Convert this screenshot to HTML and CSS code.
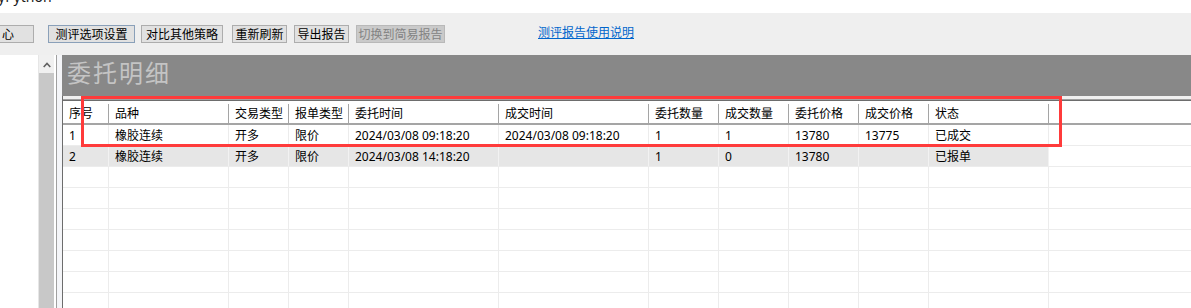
FILE: index.html
```html
<!DOCTYPE html>
<html lang="zh-CN">
<head>
    <meta charset="UTF-8">
    <meta name="viewport" content="width=device-width, initial-scale=1.0">
    <title>测评报告</title>
    <link rel="stylesheet" href="styles.css">
</head>
<body>
    <div class="titlebar"><span class="titlebar-text">yPython</span></div>

    <div class="toolbar">
        <button class="btn btn-center">心</button>
        <button class="btn btn-default btn-settings">测评选项设置</button>
        <button class="btn btn-compare">对比其他策略</button>
        <button class="btn btn-refresh">重新刷新</button>
        <button class="btn btn-export">导出报告</button>
        <button class="btn btn-simple" disabled>切换到简易报告</button>
        <a class="help-link" href="#">测评报告使用说明</a>
    </div>

    <div class="main">
        <div class="side">
            <div class="side-list"></div>
            <div class="scrollbar">
                <div class="scroll-up">
                    <svg width="8" height="6" viewBox="0 0 8 6"><polyline points="0.7,5 4,1.5 7.3,5" fill="none" stroke="#606060" stroke-width="1.6"/></svg>
                </div>
                <div class="scroll-track"></div>
            </div>
        </div>
        <div class="splitter"></div>
        <div class="content">
            <div class="section-head">委托明细</div>
            <div class="grid-frame">
                <div class="grid">
                    <div class="grid-row grid-head">
                        <div class="cell">序号</div>
                        <div class="cell">品种</div>
                        <div class="cell">交易类型</div>
                        <div class="cell">报单类型</div>
                        <div class="cell">委托时间</div>
                        <div class="cell">成交时间</div>
                        <div class="cell">委托数量</div>
                        <div class="cell">成交数量</div>
                        <div class="cell">委托价格</div>
                        <div class="cell">成交价格</div>
                        <div class="cell">状态</div>
                        <div class="cell cell-fill"></div>
                    </div>
                    <div class="grid-row">
                        <div class="cell">1</div>
                        <div class="cell">橡胶连续</div>
                        <div class="cell">开多</div>
                        <div class="cell">限价</div>
                        <div class="cell">2024/03/08 09:18:20</div>
                        <div class="cell">2024/03/08 09:18:20</div>
                        <div class="cell">1</div>
                        <div class="cell">1</div>
                        <div class="cell">13780</div>
                        <div class="cell">13775</div>
                        <div class="cell">已成交</div>
                        <div class="cell cell-fill"></div>
                    </div>
                    <div class="grid-row row-alt">
                        <div class="cell">2</div>
                        <div class="cell">橡胶连续</div>
                        <div class="cell">开多</div>
                        <div class="cell">限价</div>
                        <div class="cell">2024/03/08 14:18:20</div>
                        <div class="cell"></div>
                        <div class="cell">1</div>
                        <div class="cell">0</div>
                        <div class="cell">13780</div>
                        <div class="cell"></div>
                        <div class="cell">已报单</div>
                        <div class="cell cell-fill"></div>
                    </div>
                    <div class="grid-row"><div class="cell"></div><div class="cell"></div><div class="cell"></div><div class="cell"></div><div class="cell"></div><div class="cell"></div><div class="cell"></div><div class="cell"></div><div class="cell"></div><div class="cell"></div><div class="cell"></div><div class="cell cell-fill"></div></div>
                    <div class="grid-row"><div class="cell"></div><div class="cell"></div><div class="cell"></div><div class="cell"></div><div class="cell"></div><div class="cell"></div><div class="cell"></div><div class="cell"></div><div class="cell"></div><div class="cell"></div><div class="cell"></div><div class="cell cell-fill"></div></div>
                    <div class="grid-row"><div class="cell"></div><div class="cell"></div><div class="cell"></div><div class="cell"></div><div class="cell"></div><div class="cell"></div><div class="cell"></div><div class="cell"></div><div class="cell"></div><div class="cell"></div><div class="cell"></div><div class="cell cell-fill"></div></div>
                    <div class="grid-row"><div class="cell"></div><div class="cell"></div><div class="cell"></div><div class="cell"></div><div class="cell"></div><div class="cell"></div><div class="cell"></div><div class="cell"></div><div class="cell"></div><div class="cell"></div><div class="cell"></div><div class="cell cell-fill"></div></div>
                    <div class="grid-row"><div class="cell"></div><div class="cell"></div><div class="cell"></div><div class="cell"></div><div class="cell"></div><div class="cell"></div><div class="cell"></div><div class="cell"></div><div class="cell"></div><div class="cell"></div><div class="cell"></div><div class="cell cell-fill"></div></div>
                    <div class="grid-row"><div class="cell"></div><div class="cell"></div><div class="cell"></div><div class="cell"></div><div class="cell"></div><div class="cell"></div><div class="cell"></div><div class="cell"></div><div class="cell"></div><div class="cell"></div><div class="cell"></div><div class="cell cell-fill"></div></div>
                    <div class="grid-row"><div class="cell"></div><div class="cell"></div><div class="cell"></div><div class="cell"></div><div class="cell"></div><div class="cell"></div><div class="cell"></div><div class="cell"></div><div class="cell"></div><div class="cell"></div><div class="cell"></div><div class="cell cell-fill"></div></div>
                </div>
            </div>
        </div>
    </div>

    <!-- annotation box drawn over the grid -->
    <div class="highlight"></div>
</body>
</html>
```

FILE: styles.css
```css
:root {
    --toolbar-bg: #efefef;
    --button-bg: #e1e1e1;
    --button-border: #adadad;
    --grid-line: #ececec;
    --head-line: #a5a5a5;
    --link-color: #0066cc;
    --mark-color: #ff3b3b;
}
body {
    margin: 0;
    width: 1191px;
    height: 308px;
    overflow: hidden;
    position: relative;
    font-family: "Noto Sans CJK SC", "Microsoft YaHei", sans-serif;
    font-size: 12px;
    color: #000000;
    background-color: #ffffff;
}
.titlebar {
    height: 13px;
    overflow: hidden;
    background-color: #ffffff;
}
.titlebar-text {
    display: block;
    margin: -10px 0 0 -2px;
    font-family: "Noto Sans", sans-serif;
    font-size: 14px;
    line-height: 13px;
    color: #1a1a1a;
}
.toolbar {
    display: flex;
    align-items: flex-start;
    height: 42px;
    padding-top: 12px;
    box-sizing: border-box;
    background-color: var(--toolbar-bg);
}
.btn {
    flex-shrink: 0;
    height: 18px;
    padding: 0;
    font-family: inherit;
    font-size: 12px;
    line-height: 16px;
    color: #000000;
    background-color: var(--button-bg);
    border: 1px solid var(--button-border);
    box-sizing: border-box;
}
.btn-center {
    width: 34px;
    border-left: none;
    text-align: left;
    padding-left: 2px;
}
.btn-default {
    border-color: #8aa0b9;
}
.btn-settings {
    width: 87px;
    margin-left: 14px;
}
.btn-compare {
    width: 82px;
    margin-left: 6px;
}
.btn-refresh {
    width: 55px;
    margin-left: 9px;
}
.btn-export {
    width: 55px;
    margin-left: 7px;
}
.btn-simple {
    width: 89px;
    margin-left: 7px;
    color: #838383;
    background-color: #cacaca;
    border-color: #b9b9b9;
}
.help-link {
    margin: -1px 0 0 93px;
    line-height: 16px;
    color: var(--link-color);
    text-decoration: underline;
}
.main {
    display: flex;
    height: 253px;
    overflow: hidden;
}
.side {
    display: flex;
    flex-shrink: 0;
    width: 56px;
    padding-right: 2px;
    box-sizing: border-box;
    background-color: #ffffff;
}
.side-list {
    width: 39px;
    border-right: 1px solid #e6e6e6;
    box-sizing: border-box;
}
.scrollbar {
    display: flex;
    flex-direction: column;
    width: 15px;
}
.scroll-up {
    display: flex;
    flex-shrink: 0;
    align-items: center;
    justify-content: center;
    height: 18px;
    padding-top: 1px;
    box-sizing: border-box;
    background-color: #f0f0f0;
}
.scroll-track {
    flex: 1;
    background-color: #c8c8c8;
}
.splitter {
    flex-shrink: 0;
    width: 6px;
    border-left: 1px solid #a0a0a0;
    box-sizing: border-box;
    background-color: #f4f5f8;
}
.content {
    flex: 1;
    display: flex;
    flex-direction: column;
    min-width: 0;
    overflow: hidden;
}
.section-head {
    flex-shrink: 0;
    height: 41px;
    padding-left: 5px;
    font-size: 24px;
    line-height: 34px;
    letter-spacing: 2px;
    color: #c4c4c4;
    background-color: #888888;
}
.grid-frame {
    flex: 1;
    min-height: 0;
    overflow: hidden;
    padding-top: 3px;
    border-left: 1px solid #6d6d6d;
    background-color: #f0f0f0;
}
.grid {
    border-top: 1px solid #a0a0a0;
    background-color: #ffffff;
}
.grid-row {
    display: grid;
    grid-template-columns: 46px 120px 60px 60px 150px 150px 70px 70px 70px 70px 120px 1fr;
    height: 21px;
    border-bottom: 1px solid var(--grid-line);
    box-sizing: border-box;
}
.cell {
    padding: 2px 0 0 6px;
    font-family: "Noto Sans", "Noto Sans CJK SC", sans-serif;
    line-height: 18px;
    white-space: nowrap;
    overflow: hidden;
    border-right: 1px solid var(--grid-line);
}
.cell-fill {
    border-right: none;
}
.grid-head {
    height: 25px;
    padding-top: 3px;
    border-top: 1px solid #6d6d6d;
    border-bottom: 2px solid var(--head-line);
}
.grid-head .cell {
    padding-top: 0;
    line-height: 19px;
    border-right-color: var(--head-line);
}
.grid-head .cell-fill {
    border-right: none;
}
.row-alt .cell {
    background-color: #e6e6e6;
    border-right-color: #f2f2f2;
}
.row-alt .cell-fill {
    background-color: #ffffff;
}
.highlight {
    position: absolute;
    left: 81px;
    top: 96px;
    width: 981px;
    height: 51px;
    border: 3px solid var(--mark-color);
    box-sizing: border-box;
    pointer-events: none;
}
```
